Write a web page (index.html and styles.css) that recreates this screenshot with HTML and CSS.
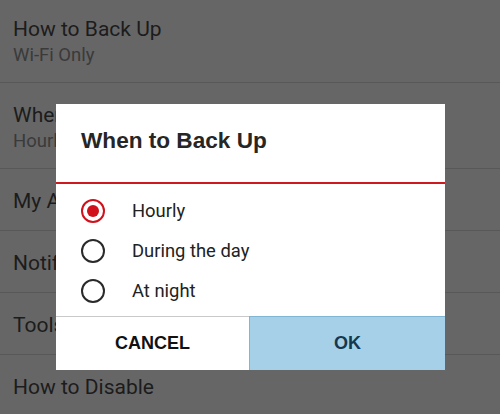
FILE: index.html
```
<!DOCTYPE html>
<html>
<head>
<meta charset="utf-8">
<link rel="stylesheet" href="styles.css">
</head>
<body>
<div class="list">
  <div class="row two">
    <div class="title">How to Back Up</div>
    <div class="sub">Wi-Fi Only</div>
  </div>
  <div class="row two">
    <div class="title">When to Back Up</div>
    <div class="sub">Hourly</div>
  </div>
  <div class="row one"><div class="title">My Account</div></div>
  <div class="row one"><div class="title">Notifications</div></div>
  <div class="row one"><div class="title">Tools</div></div>
  <div class="row one"><div class="title">How to Disable</div></div>
</div>

<div class="dialog">
  <div class="dlg-head">When to Back Up</div>
  <div class="options">
    <div class="option">
      <span class="radio checked"></span>
      <span class="opt-label">Hourly</span>
    </div>
    <div class="option">
      <span class="radio"></span>
      <span class="opt-label">During the day</span>
    </div>
    <div class="option">
      <span class="radio"></span>
      <span class="opt-label">At night</span>
    </div>
  </div>
  <div class="buttons">
    <div class="btn cancel">CANCEL</div>
    <div class="btn ok">OK</div>
  </div>
</div>
</body>
</html>
```
FILE: styles.css
```
html, body {
  margin: 0;
  padding: 0;
}
body {
  width: 500px;
  height: 414px;
  overflow: hidden;
  background: #666666;
  position: relative;
  font-family: Roboto, "Liberation Sans", sans-serif;
}
.list {
  margin-top: -3px;
}
.row {
  box-sizing: border-box;
  border-bottom: 1px solid #585858;
  padding: 20px 0 0 13px;
}
.row.two { height: 86px; }
.row.one { height: 62px; }
.title {
  font-size: 21px;
  line-height: 24px;
  color: #1c1c1c;
}
.sub {
  margin-top: 4px;
  font-size: 18.5px;
  line-height: 20px;
  color: #3a3a3a;
}
.dialog {
  position: absolute;
  left: 56px;
  top: 104px;
  width: 389px;
  height: 266px;
  background: #ffffff;
  display: flex;
  flex-direction: column;
}
.dlg-head {
  box-sizing: border-box;
  height: 80px;
  padding: 24px 0 0 25px;
  font-family: "Liberation Sans", Arial, sans-serif;
  font-weight: bold;
  font-size: 22.6px;
  line-height: 26px;
  color: #262626;
  border-bottom: 2px solid #cc1a1f;
}
.options {
  box-sizing: border-box;
  height: 133px;
  padding: 7px 0 0 25px;
  border-bottom: 1px solid #c9c9c9;
}
.option {
  display: flex;
  align-items: center;
  height: 40px;
}
.radio {
  box-sizing: border-box;
  width: 24px;
  height: 24px;
  border-radius: 50%;
  border: 2.5px solid #2a2a2a;
  display: flex;
  align-items: center;
  justify-content: center;
  flex: none;
}
.radio.checked {
  border-color: #d0101a;
}
.radio.checked::after {
  content: "";
  width: 12px;
  height: 12px;
  border-radius: 50%;
  background: #d0101a;
}
.opt-label {
  margin-left: 27px;
  font-size: 18.4px;
  line-height: 40px;
  color: #222222;
}
.buttons {
  flex: 1;
  display: flex;
}
.btn {
  box-sizing: border-box;
  display: flex;
  align-items: center;
  justify-content: center;
  font-family: "Liberation Sans", Arial, sans-serif;
  font-weight: bold;
  font-size: 18px;
}
.cancel {
  width: 193px;
  color: #111111;
}
.ok {
  flex: 1;
  background: #a6d0e7;
  border-left: 1px solid #80b5d3;
  border-top: 1px solid #80b5d3;
  margin-top: -1px;
  color: #143850;
}
```
